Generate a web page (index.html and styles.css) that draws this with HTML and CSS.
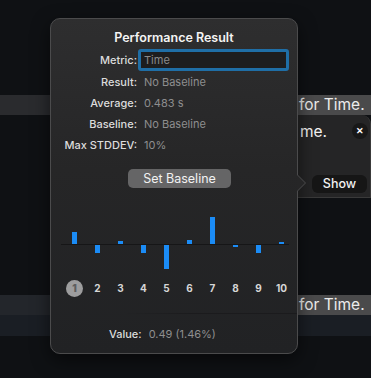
FILE: index.html
```html
<!DOCTYPE html>
<html lang="en">
<head>
    <meta charset="UTF-8">
    <title>Performance Result</title>
    <link rel="stylesheet" href="styles.css">
</head>
<body>
    <div class="scene">
        <!-- what sits behind the popover -->
        <div class="backdrop">
            <div class="band">
                <div class="band-fill"></div>
                <div class="band-tail">for Time.</div>
            </div>
            <div class="note-row">
                <div class="note">
                    <div class="note-head">
                        <span class="note-text">me.</span>
                        <span class="note-close">&#x2715;</span>
                    </div>
                    <div class="note-show">Show</div>
                </div>
            </div>
            <div class="gap"></div>
            <div class="band band-low">
                <div class="band-fill"></div>
                <div class="band-tail">for Time.</div>
            </div>
            <div class="band-deep"></div>
        </div>

        <div class="popover">
            <div class="title">Performance Result</div>

            <div class="fields">
                <label class="field-label" for="metric">Metric:</label>
                <div class="text-field"><input id="metric" type="text" placeholder="Time"></div>

                <span class="field-label">Result:</span>
                <span class="field-value">No Baseline</span>

                <span class="field-label">Average:</span>
                <span class="field-value">0.483 s</span>

                <span class="field-label">Baseline:</span>
                <span class="field-value">No Baseline</span>

                <span class="field-label">Max STDDEV:</span>
                <span class="field-value">10%</span>
            </div>

            <button class="set-baseline">Set Baseline</button>

            <div class="chart">
                <div class="chart-half chart-up">
                    <div class="slot"><i class="bar" style="height: 12px"></i></div>
                    <div class="slot"></div>
                    <div class="slot"><i class="bar" style="height: 3px"></i></div>
                    <div class="slot"></div>
                    <div class="slot"></div>
                    <div class="slot"><i class="bar" style="height: 4px"></i></div>
                    <div class="slot"><i class="bar" style="height: 27px"></i></div>
                    <div class="slot"></div>
                    <div class="slot"></div>
                    <div class="slot"><i class="bar" style="height: 2px"></i></div>
                </div>
                <div class="chart-axis"></div>
                <div class="chart-half chart-down">
                    <div class="slot"></div>
                    <div class="slot"><i class="bar" style="height: 8px"></i></div>
                    <div class="slot"></div>
                    <div class="slot"><i class="bar" style="height: 8px"></i></div>
                    <div class="slot"><i class="bar" style="height: 24px"></i></div>
                    <div class="slot"></div>
                    <div class="slot"></div>
                    <div class="slot"><i class="bar" style="height: 2px"></i></div>
                    <div class="slot"><i class="bar" style="height: 8px"></i></div>
                    <div class="slot"></div>
                </div>
                <div class="runs">
                    <span class="run"><b class="run-current">1</b></span>
                    <span class="run">2</span>
                    <span class="run">3</span>
                    <span class="run">4</span>
                    <span class="run">5</span>
                    <span class="run">6</span>
                    <span class="run">7</span>
                    <span class="run">8</span>
                    <span class="run">9</span>
                    <span class="run">10</span>
                </div>
            </div>

            <div class="divider"></div>

            <div class="value-row">
                <span class="field-label">Value:</span>
                <span class="field-value">0.49 (1.46%)</span>
            </div>
        </div>
    </div>
</body>
</html>
```

FILE: styles.css
```css
body {
    margin: 0;
    background-color: #0f1114;
    font-family: 'Inter', 'Roboto', sans-serif;
    color: #f2f2f2;
}

.scene {
    position: relative;
    width: 371px;
    height: 378px;
    overflow: hidden;
}

/* background rows */
.backdrop {
    padding-top: 95px;
}

.band {
    display: flex;
    height: 20px;
}

.band-fill {
    flex: 1;
    background-color: #2a2b2e;
}

.band-low .band-fill {
    background-color: #23262b;
}

.band-tail {
    width: 72px;
    padding-left: 1px;
    background-color: #4a4a4b;
    color: #ececec;
    font-size: 15.5px;
    line-height: 20px;
    white-space: nowrap;
    overflow: hidden;
}

.note-row {
    display: flex;
    justify-content: flex-end;
    height: 83px;
}

.note {
    width: 73px;
    box-sizing: border-box;
    background-color: #252526;
    border: 1px solid #3a3a3a;
    border-left: 0;
    border-top: 0;
    border-radius: 0 9px 0 0;
    display: flex;
    flex-direction: column;
}

.note-head {
    display: flex;
    justify-content: space-between;
    align-items: center;
    height: 32px;
    padding-right: 2px;
}

.note-text {
    padding-left: 2px;
    font-size: 15.5px;
}

.note-close {
    width: 16px;
    height: 16px;
    border-radius: 50%;
    background-color: #181818;
    color: #ffffff;
    font-size: 9px;
    font-weight: 700;
    line-height: 16px;
    text-align: center;
}

.note-show {
    margin-top: 28px;
    margin-left: 14px;
    width: 55px;
    height: 18px;
    border-radius: 6px;
    background-color: #161616;
    font-size: 12.5px;
    font-weight: 500;
    line-height: 18px;
    text-align: center;
}

.gap {
    height: 97px;
}

.band-deep {
    height: 21px;
    background-color: #1a1e24;
}

/* the popover */
.popover {
    position: absolute;
    left: 50px;
    top: 18px;
    width: 248px;
    height: 336px;
    box-sizing: border-box;
    padding-top: 11px;
    border: 1px solid #4b4b4c;
    border-radius: 10px;
    background: linear-gradient(#2e2e2f, #262627 45%, #212224);
    box-shadow: 0 6px 18px rgba(0, 0, 0, 0.55);
    display: flex;
    flex-direction: column;
}

/* arrow pointing at the Show button */
.popover::before,
.popover::after {
    content: "";
    position: absolute;
    width: 0;
    height: 0;
    border-style: solid;
    border-color: transparent;
}

.popover::before {
    right: -9px;
    top: 155px;
    border-width: 9px 0 9px 9px;
    border-left-color: #4b4b4c;
}

.popover::after {
    right: -8px;
    top: 156px;
    border-width: 8px 0 8px 8px;
    border-left-color: #262627;
}

.title {
    text-align: center;
    font-size: 12.5px;
    font-weight: 600;
    line-height: 16px;
    color: #f4f4f4;
}

.fields {
    display: grid;
    grid-template-columns: 86px 1fr;
    grid-template-rows: 22px;
    grid-auto-rows: 21px;
    column-gap: 1px;
    align-items: center;
    margin-top: 3px;
    padding-right: 8px;
}

.field-label {
    text-align: right;
    font-size: 11px;
    font-weight: 500;
    color: #dcdcdc;
}

.field-value {
    padding-left: 6px;
    font-size: 11px;
    color: #8e8e8f;
}

.text-field {
    height: 22px;
    box-sizing: border-box;
    border: 3px solid #1f6ea6;
    border-radius: 3px;
    background-color: #1d1d1e;
}

.text-field input {
    display: block;
    width: 100%;
    height: 16px;
    box-sizing: border-box;
    margin: 0;
    padding: 0 3px;
    border: 0;
    background: transparent;
    font-family: inherit;
    font-size: 11px;
    line-height: 16px;
    color: #f0f0f0;
    outline: none;
}

.text-field input::placeholder {
    color: #8a8a8b;
}

.set-baseline {
    align-self: flex-start;
    margin: 14px 0 0 77px;
    width: 103px;
    height: 19px;
    padding: 0;
    border: 0;
    border-radius: 5px;
    background-color: #656566;
    font-family: inherit;
    font-size: 12.5px;
    color: #f2f2f2;
}

/* run chart */
.chart {
    margin: 28px 0 0 12px;
    width: 230px;
}

.chart-half {
    display: flex;
    height: 28px;
}

.chart-up {
    align-items: flex-end;
}

.chart-down {
    align-items: flex-start;
}

.slot {
    flex: 1;
    display: flex;
    justify-content: center;
}

.bar {
    display: block;
    width: 5px;
    background-color: #1b8cf6;
}

.chart-axis {
    height: 1px;
    margin: 0 4px 0 -2px;
    background-color: #161617;
}

.runs {
    display: flex;
    margin-top: 7px;
}

.run {
    flex: 1;
    display: flex;
    justify-content: center;
    height: 17px;
    font-size: 10px;
    font-weight: 700;
    line-height: 17px;
    color: #d6d6d6;
}

.run-current {
    width: 17px;
    border-radius: 50%;
    background-color: #9d9d9e;
    color: #5e5e5f;
    text-align: center;
}

.divider {
    height: 1px;
    margin: 16px 0 0 72px;
    background: linear-gradient(to right, rgba(20, 20, 22, 0), #1b1b1d 40%);
}

.value-row {
    display: flex;
    align-items: center;
    margin: 13px 0 0 58px;
    gap: 1px;
}
```
